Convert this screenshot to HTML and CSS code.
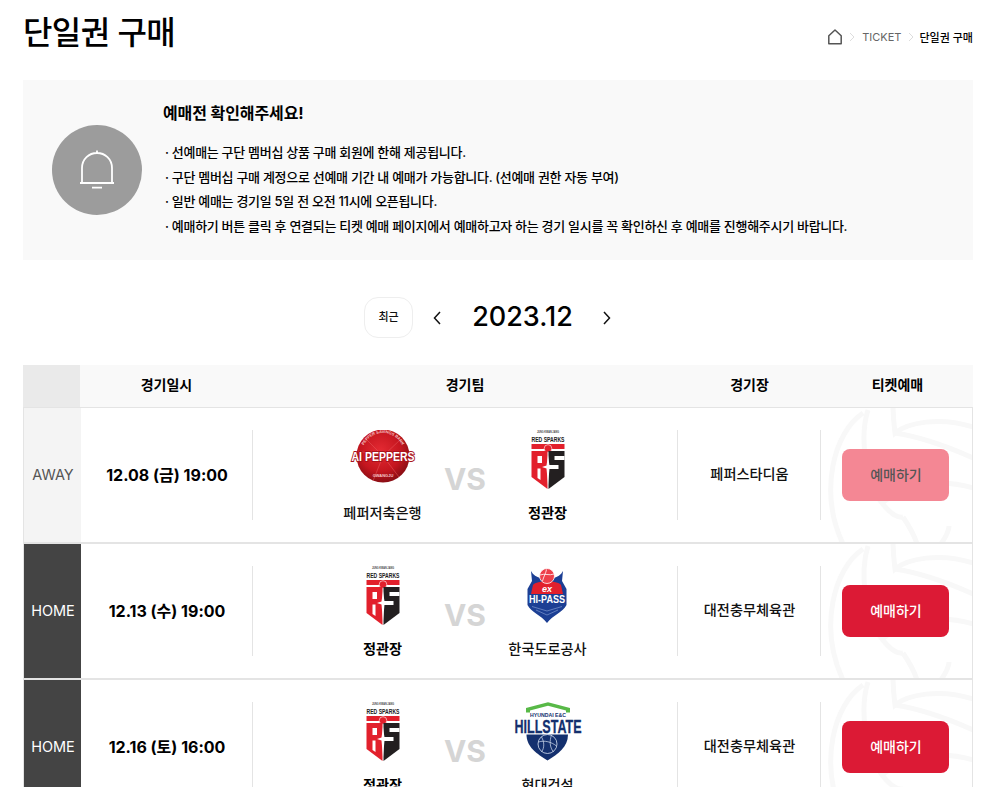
FILE: index.html
```html
<!DOCTYPE html>
<html lang="ko">
<head>
<meta charset="utf-8">
<title>단일권 구매</title>
<link rel="stylesheet" href="styles.css">
</head>
<body>
<svg class="defs" width="0" height="0" aria-hidden="true">
  <defs>
    <radialGradient id="redball" cx="45%" cy="40%" r="65%">
      <stop offset="0" stop-color="#e42a33"/>
      <stop offset="0.6" stop-color="#c5161f"/>
      <stop offset="1" stop-color="#7d0c12"/>
    </radialGradient>
    <symbol id="rs" viewBox="0 0 34 59">
      <text x="17" y="3" class="rs-small" text-anchor="middle" textLength="22" lengthAdjust="spacingAndGlyphs">JUNG KWAN JANG</text>
      <text x="17" y="11.500" class="rs-name" text-anchor="middle" textLength="33" lengthAdjust="spacingAndGlyphs">RED SPARKS</text>
      <path d="M0.500 14H33.500V19H0.500Z" fill="#e2202c"/>
      <circle cx="17" cy="18.500" r="3.800" fill="#e2202c" stroke="#fff" stroke-width=".6"/>
      <path d="M0.500 21H16.500V59L0.500 47Z" fill="#e2202c"/>
      <path d="M6.500 26H11V33H6.500ZM6.500 38.500H9.500V50L6.500 48Z" fill="#fff"/>
      <path d="M17.500 21H33.500V47L17.500 59Z" fill="#231f20"/>
      <path d="M23.500 26H33.500V30H23.500ZM17.500 35H27.500V39H17.500Z" fill="#fff"/>
      <path d="M17 25L18.500 35.500L23 37L18.500 38.500L17 55L15.500 38.500L11 37L15.500 35.500Z" fill="#fff"/>
    </symbol>
    <symbol id="peppers" viewBox="0 0 68 56">
      <circle cx="34" cy="27" r="26.500" fill="url(#redball)"/>
      <path d="M16 9L34 27L52 10M34 27L24 52M34 27L50 48M9 22L34 27" fill="none" stroke="#e85a5f" stroke-width=".5"/>
      <path id="pep-arc" d="M13 25A21 21 0 0 1 55 25" fill="none"/>
      <text class="pep-small"><textPath href="#pep-arc" startOffset="50%" text-anchor="middle">PEPPER SAVINGS BANK</textPath></text>
      <text x="34" y="47.500" class="pep-small" text-anchor="middle">GWANGJU</text>
      <text x="34" y="32" class="pep-name" text-anchor="middle" textLength="63" lengthAdjust="spacingAndGlyphs">AI PEPPERS</text>
    </symbol>
    <symbol id="hipass" viewBox="0 0 40 55">
      <path d="M4 3C6 7 10 9 13 10L27 10C30 9 34 7 36 3L35 13L39.500 21V37C36 44 26 47 20 55C14 47 4 44 .5 37V21L5 13Z" fill="#1c3f94"/>
      <path d="M6 17C10 12 30 12 34 17L36 26H4Z" fill="#e2202c"/>
      <circle cx="20" cy="8" r="7.500" fill="#ee3f4a" stroke="#fff" stroke-width=".8"/>
      <path d="M13 7C18 5 22 8 27 6M15.500 13C16.500 9 19 5 19.500 1.500" fill="none" stroke="#fff" stroke-width=".8"/>
      <text x="20" y="23.500" class="hp-ex" text-anchor="middle">ex</text>
      <text x="20" y="34.500" class="hp-name" text-anchor="middle" textLength="36" lengthAdjust="spacingAndGlyphs">HI-PASS</text>
      <path d="M5 38.500L20 43L35 38.500M9 42L20 47L31 42" fill="none" stroke="#8fa6d8" stroke-width=".6"/>
    </symbol>
    <symbol id="hillstate" viewBox="0 0 68 59">
      <path d="M12 10.500V6L34 .3L56 6V10.500H52V8.500L34 3.800L16 8.500V10.500Z" fill="#58b947"/>
      <text x="34" y="15" class="hs-small" text-anchor="middle" textLength="36" lengthAdjust="spacingAndGlyphs">HYUNDAI E&amp;C</text>
      <text x="34" y="30.500" class="hs-name" text-anchor="middle" textLength="67" lengthAdjust="spacingAndGlyphs">HILLSTATE</text>
      <path d="M12.500 32.500H54C54 45 44 52 33.500 58.500C23 52 12.500 45 12.500 32.500Z" fill="#14306e"/>
      <circle cx="33.500" cy="42" r="9.500" fill="none" stroke="#d8e2f2" stroke-width=".8"/>
      <path d="M24.500 40C30.500 38 37.500 40 42.500 44M27.500 35C30.500 40 30.500 46 27.500 50M37.500 33C35.500 39 35.500 45 39.500 50" fill="none" stroke="#d8e2f2" stroke-width=".7"/>
    </symbol>
    <symbol id="watermark" viewBox="0 0 152 136">
      <g fill="none" stroke="#f8f8f8" stroke-width="5">
        <path d="M42 5C12 25 -2 85 22 136"/>
        <path d="M47 2C38 30 45 75 61 95C68 104 76 110 82 109"/>
        <path d="M72 -4C72 8 73 17 74 25C86 15 118 8 152 19"/>
        <path d="M74 25C100 29 130 40 152 50"/>
        <path d="M61 95C85 76 120 70 152 80"/>
        <path d="M82 109C88 118 93 126 96 136"/>
        <path d="M128 118C128 124 124 130 120 136"/>
      </g>
    </symbol>
  </defs>
</svg>

<div class="page">
  <header class="head">
    <h1 class="title">단일권 구매</h1>
    <nav class="crumbs">
      <svg class="home" viewBox="0 0 16 16" width="16" height="16"><path d="M1.800 14.800V6.800L8 1L14.200 6.800V14.800Z" fill="none" stroke="#555" stroke-width="1.500" stroke-linejoin="round"/></svg>
      <svg class="sep" viewBox="0 0 6 10" width="6" height="10"><path d="M1 1L5 5L1 9" fill="none" stroke="#ddd"/></svg>
      <span class="crumb">TICKET</span>
      <svg class="sep" viewBox="0 0 6 10" width="6" height="10"><path d="M1 1L5 5L1 9" fill="none" stroke="#ddd"/></svg>
      <span class="crumb current">단일권 구매</span>
    </nav>
  </header>

  <section class="notice">
    <div class="bell">
      <svg viewBox="0 0 36 40" width="36" height="40"><path d="M3 32V18C3 9 10 3 18 3C26 3 33 9 33 18V32M1 33H35M13 37.700H23M18 .5V3" fill="none" stroke="#fff" stroke-width="1.800"/></svg>
    </div>
    <div class="notice-body">
      <h2 class="notice-title">예매전 확인해주세요!</h2>
      <ul class="notice-list">
        <li>· 선예매는 구단 멤버십 상품 구매 회원에 한해 제공됩니다.</li>
        <li>· 구단 멤버십 구매 계정으로 선예매 기간 내 예매가 가능합니다. (선예매 권한 자동 부여)</li>
        <li>· 일반 예매는 경기일 5일 전 오전 11시에 오픈됩니다.</li>
        <li>· 예매하기 버튼 클릭 후 연결되는 티켓 예매 페이지에서 예매하고자 하는 경기 일시를 꼭 확인하신 후 예매를 진행해주시기 바랍니다.</li>
      </ul>
    </div>
  </section>

  <div class="month">
    <button class="recent">최근</button>
    <svg class="arrow" viewBox="0 0 8 14" width="8" height="14"><path d="M7 1L1.500 7L7 13" fill="none" stroke="#111" stroke-width="1.500"/></svg>
    <strong class="ym">2023.12</strong>
    <svg class="arrow" viewBox="0 0 8 14" width="8" height="14"><path d="M1 1L6.500 7L1 13" fill="none" stroke="#111" stroke-width="1.500"/></svg>
  </div>

  <div class="table">
    <div class="thead">
      <div class="th th-blank"></div>
      <div class="th">경기일시</div>
      <div class="th">경기팀</div>
      <div class="th">경기장</div>
      <div class="th">티켓예매</div>
    </div>

    <div class="row">
      <div class="kind away">AWAY</div>
      <div class="when">12.08 (금) 19:00</div>
      <div class="teams">
        <div class="team"><svg class="logo"><use href="#peppers" x="6" y="-1" width="68" height="56"/></svg><span class="name">페퍼저축은행</span></div>
        <span class="vs">VS</span>
        <div class="team"><svg class="logo"><use href="#rs" x="23" y="0" width="34" height="59"/></svg><span class="name strong">정관장</span></div>
      </div>
      <div class="venue">페퍼스타디움</div>
      <div class="ticket">
        <svg class="mark"><use href="#watermark" width="152" height="136"/></svg>
        <button class="buy off">예매하기</button>
      </div>
    </div>

    <div class="row">
      <div class="kind home-game">HOME</div>
      <div class="when">12.13 (수) 19:00</div>
      <div class="teams">
        <div class="team"><svg class="logo"><use href="#rs" x="23" y="0" width="34" height="59"/></svg><span class="name strong">정관장</span></div>
        <span class="vs">VS</span>
        <div class="team"><svg class="logo"><use href="#hipass" x="19" y="2" width="40" height="55"/></svg><span class="name">한국도로공사</span></div>
      </div>
      <div class="venue">대전충무체육관</div>
      <div class="ticket">
        <svg class="mark"><use href="#watermark" width="152" height="136"/></svg>
        <button class="buy">예매하기</button>
      </div>
    </div>

    <div class="row">
      <div class="kind home-game">HOME</div>
      <div class="when">12.16 (토) 16:00</div>
      <div class="teams">
        <div class="team"><svg class="logo"><use href="#rs" x="23" y="0" width="34" height="59"/></svg><span class="name strong">정관장</span></div>
        <span class="vs">VS</span>
        <div class="team"><svg class="logo"><use href="#hillstate" x="6" y="0" width="68" height="59"/></svg><span class="name">현대건설</span></div>
      </div>
      <div class="venue">대전충무체육관</div>
      <div class="ticket">
        <svg class="mark"><use href="#watermark" width="152" height="136"/></svg>
        <button class="buy">예매하기</button>
      </div>
    </div>
  </div>
</div>
</body>
</html>
```

FILE: styles.css
```css
* { box-sizing: border-box; }
html, body { margin: 0; padding: 0; height: 787px; overflow: hidden; background: #fff; }
body { font-family: Inter, "Noto Sans CJK KR", sans-serif; color: #000; }
.defs { position: absolute; }
.page { padding: 0 25px 0 23px; }

.head { display: flex; justify-content: space-between; align-items: center; height: 80px; padding-bottom: 14px; }
.title { margin: 0; font-size: 32px; font-weight: 500; letter-spacing: -0.6px; line-height: 40px; }
.crumbs { display: flex; align-items: center; gap: 7px; font-size: 11px; margin-top: 8px; }
.home { margin-right: -1px; }
.crumb { color: #666; }
.crumb.current { color: #000; font-weight: 500; margin-left: -2px; }

.notice { display: flex; background: #f9f9f9; height: 180px; padding-left: 29px; align-items: center; }
.bell { width: 90px; height: 90px; border-radius: 50%; background: #9c9c9c; display: flex; align-items: center; justify-content: center; flex: none; margin-right: 21px; }
.notice-body { align-self: flex-start; padding-top: 22px; }
.notice-title { margin: 0 0 16px; font-size: 16px; font-weight: 700; line-height: 22px; letter-spacing: -0.1px; }
.notice-list { list-style: none; margin: 0; padding: 0 0 0 2px; font-size: 13px; font-weight: 500; line-height: 24.5px; letter-spacing: -0.3px; color: #000; }

.month { display: flex; align-items: center; justify-content: flex-start; height: 105px; padding: 10px 0 0 341px; }
.recent { width: 49px; height: 41px; border: 1px solid #eee; border-radius: 14px; background: #fff; font: 500 11px Inter, "Noto Sans CJK KR", sans-serif; color: #111; padding: 0 0 4px; margin-right: 20px; }
.arrow { flex: none; }
.ym { width: 162px; text-align: center; font-size: 27px; font-weight: 500; line-height: 40px; padding: 0 0 1px 1px; }

.table { display: block; }
.thead { display: grid; grid-template-columns: 57px 173px 424px 145px 1fr; height: 43px; background: #f9f9f9; border-bottom: 1px solid #e4e4e4; }
.th { display: flex; align-items: center; justify-content: center; font-size: 14px; font-weight: 700; padding-bottom: 4px; }
.th-blank { background: #eaeaea; }

.row { display: grid; grid-template-columns: 57px 172px 425px 143px 1fr; height: 136px; border: solid #e4e4e4; border-width: 0 1px 2px; align-items: stretch; }
.kind { display: flex; align-items: center; justify-content: center; font-size: 14.500px; padding: 0 0 2px 1px; }
.away { background: #f4f4f4; color: #555; }
.home-game { background: #444; color: #fff; }
.when { display: flex; align-items: center; justify-content: center; font-size: 16px; font-weight: 700; position: relative; padding-bottom: 3px; }
.when::after, .teams::after, .venue::after { content: ""; position: absolute; right: 0; top: 22px; height: 90px; width: 1px; background: #e4e4e4; }
.teams { position: relative; display: flex; justify-content: center; align-items: flex-start; padding: 22px 1px 0 0; }
.team { width: 120px; display: flex; flex-direction: column; align-items: center; }
.logo { width: 80px; height: 60px; display: block; }
.name { font-size: 14.200px; font-weight: 500; line-height: 20px; margin-top: 13px; color: #111; }
.name.strong { font-weight: 700; color: #000; }
.vs { width: 45px; text-align: center; font-size: 30px; font-weight: 700; line-height: 40px; color: #d5d5d5; margin-top: 29px; }
.venue { position: relative; display: flex; align-items: center; justify-content: center; font-size: 14.200px; font-weight: 500; color: #111; padding-bottom: 4px; }
.ticket { position: relative; display: flex; align-items: center; justify-content: center; overflow: hidden; padding-right: 3px; }
.mark { position: absolute; left: 0; top: 0; width: 152px; height: 136px; }
.buy { position: relative; width: 107px; height: 52px; border: 0; border-radius: 8px; background: #dc1a35; color: #fff; font: 500 14px Inter, "Noto Sans CJK KR", sans-serif; padding: 0 0 3px 2px; }
.buy.off { background: #f48794; color: #555; }

.rs-small { font: 700 2.600px "Liberation Sans", sans-serif; fill: #444; }
.rs-name { font: 700 7.800px "Liberation Sans", sans-serif; fill: #222; }
.pep-small { font: 700 4px "Liberation Sans", sans-serif; fill: #f6c7c9; }
.pep-name { font: 700 12px "Liberation Sans", sans-serif; fill: #fff; stroke: #a8121b; stroke-width: 2px; paint-order: stroke; }
.hp-ex { font: italic 700 9px "Liberation Sans", sans-serif; fill: #fff; }
.hp-name { font: 700 10px "Liberation Sans", sans-serif; fill: #fff; }
.hs-small { font: 700 5px "Liberation Sans", sans-serif; fill: #14306e; }
.hs-name { font: 700 19px "Liberation Sans", sans-serif; fill: #14306e; stroke: #14306e; stroke-width: .3px; }
```
